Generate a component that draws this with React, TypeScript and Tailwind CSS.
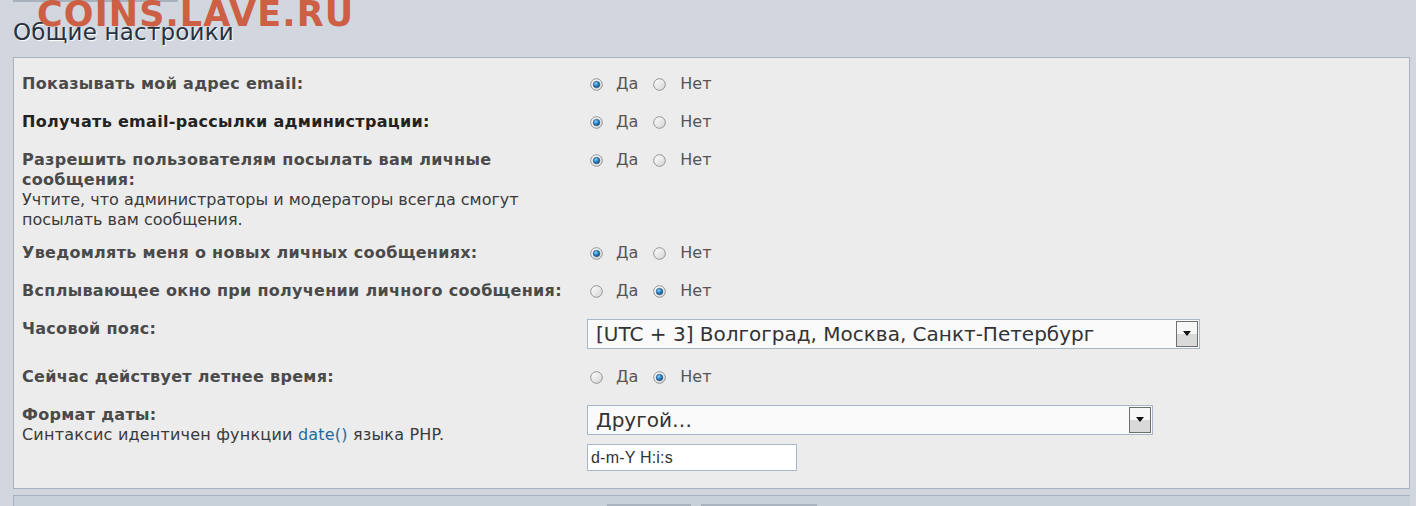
import React from "react";

const Radio = ({ checked }: { checked: boolean }) => (
  <svg width="13" height="13" viewBox="0 0 13 13" className="shrink-0">
    <defs>
      <linearGradient id={checked ? "rgc" : "rgu"} x1="0" y1="0" x2="1" y2="1">
        <stop offset="0" stopColor="#ffffff" />
        <stop offset="1" stopColor="#d4d4d4" />
      </linearGradient>
      <radialGradient id="dot" cx="0.4" cy="0.35" r="0.7">
        <stop offset="0" stopColor="#8fd0ff" />
        <stop offset="0.5" stopColor="#2a86c9" />
        <stop offset="1" stopColor="#0b3f6e" />
      </radialGradient>
    </defs>
    <circle cx="6.5" cy="6.5" r="5.8" fill={`url(#${checked ? "rgc" : "rgu"})`} stroke="#8f9296" strokeWidth="1" />
    {checked && <circle cx="6.5" cy="6.5" r="3.3" fill="url(#dot)" stroke="#234a6a" strokeWidth="0.5" />}
  </svg>
);

const YesNo = ({ yes }: { yes: boolean }) => (
  <div className="flex items-center h-[20px] text-[16px] text-[#555] pl-[3px]">
    <Radio checked={yes} />
    <span className="ml-[13px]">Да</span>
    <span className="ml-[15px]"><Radio checked={!yes} /></span>
    <span className="ml-[14px]">Нет</span>
  </div>
);

const Select = ({ text, w }: { text: string; w: string }) => (
  <div className={`flex items-center h-[30px] border border-[#a9b8c8] bg-[#fafafa] ${w}`}>
    <span className="flex-1 pl-[8px] text-[20px] text-[#333] leading-[28px] whitespace-nowrap overflow-hidden">{text}</span>
    <div className="relative mr-[1px] h-[26px] w-[22px] border border-[#6f6f6f] bg-gradient-to-b from-[#f7f7f7] from-50% to-[#d9d9d9] to-50% flex items-start justify-center pt-[9px]">
      <svg width="8" height="5" viewBox="0 0 8 5"><path d="M0 0H8L4 5Z" fill="#111" /></svg>
    </div>
  </div>
);

const Label = ({ children, dark }: { children: React.ReactNode; dark?: boolean }) => (
  <div className={`font-bold text-[16px] tracking-[0.3px] leading-[20px] ${dark ? "text-[#222]" : "text-[#4a4a4a]"}`}>{children}</div>
);

const Row = ({ left, right, pb = "pb-[9px]" }: { left: React.ReactNode; right: React.ReactNode; pb?: string }) => (
  <div className={`flex items-start pt-[9px] ${pb}`}>
    <div className="w-[565px] shrink-0">{left}</div>
    <div className="flex-1">{right}</div>
  </div>
);

export default function App() {
  return (
    <div className="relative h-[506px] overflow-hidden bg-[#d2d6de] font-['DejaVu_Sans','Verdana',sans-serif]">
      <div className="ml-[13px] w-[165px] h-[2px] bg-[#a8b1bc]" />
      <div className="absolute left-[37px] top-[-6px] text-[35px] font-bold tracking-[1.1px] text-[#cd5f45] leading-[40px]">
        COINS.LAVE.RU
      </div>
      <h2 className="ml-[13px] mt-[15px] text-[23px] tracking-[0.2px] leading-[30px] text-[#28313f] [text-shadow:1px_1px_1px_#ffffff]">
        Общие настройки
      </h2>
      <div className="ml-[13px] mt-[10px] w-[1397px] border border-[#a9b2bd] bg-[#ececec] pl-[8px] pt-[7px] pb-[8px]">
        <Row left={<Label>Показывать мой адрес email:</Label>} right={<YesNo yes />} />
        <Row left={<Label dark>Получать email-рассылки администрации:</Label>} right={<YesNo yes />} />
        <Row
          pb="pb-[4px]"
          left={
            <div>
              <Label>Разрешить пользователям посылать вам личные<br />сообщения:</Label>
              <div className="text-[16px] leading-[20px] text-[#3a3a3a]">
                Учтите, что администраторы и модераторы всегда смогут<br />посылать вам сообщения.
              </div>
            </div>
          }
          right={<YesNo yes />}
        />
        <Row left={<Label>Уведомлять меня о новых личных сообщениях:</Label>} right={<YesNo yes />} />
        <Row left={<Label>Всплывающее окно при получении личного сообщения:</Label>} right={<YesNo yes={false} />} />
        <Row
          left={<Label>Часовой пояс:</Label>}
          right={<Select text="[UTC + 3] Волгоград, Москва, Санкт-Петербург" w="w-[613px]" />}
        />
        <Row left={<Label>Сейчас действует летнее время:</Label>} right={<YesNo yes={false} />} />
        <Row
          left={
            <div>
              <Label>Формат даты:</Label>
              <div className="text-[16px] tracking-[0.2px] leading-[20px] text-[#3a3a3a]">
                Синтаксис идентичен функции <span className="text-[#1f6a9e]">date()</span> языка PHP.
              </div>
            </div>
          }
          right={
            <div className="flex flex-col gap-[9px]">
              <Select text="Другой…" w="w-[566px]" />
              <div className="w-[210px] h-[27px] border border-[#a9b8c8] bg-white pl-[3px] font-['Liberation_Sans',Arial,sans-serif] text-[16px] tracking-[0.2px] leading-[25px] text-[#333]">
                d-m-Y H:i:s
              </div>
            </div>
          }
        />
      </div>
      <div className="ml-[13px] mt-[6px] w-[1397px] h-[20px] border-t border-l border-[#a7b4c0] bg-[#c8d1d9] flex">
        <div className="ml-[593px] mt-[8px] w-[84px] h-[4px] bg-[#a9b3be]" />
        <div className="ml-[10px] mt-[8px] w-[116px] h-[4px] bg-[#a9b3be]" />
      </div>
    </div>
  );
}
